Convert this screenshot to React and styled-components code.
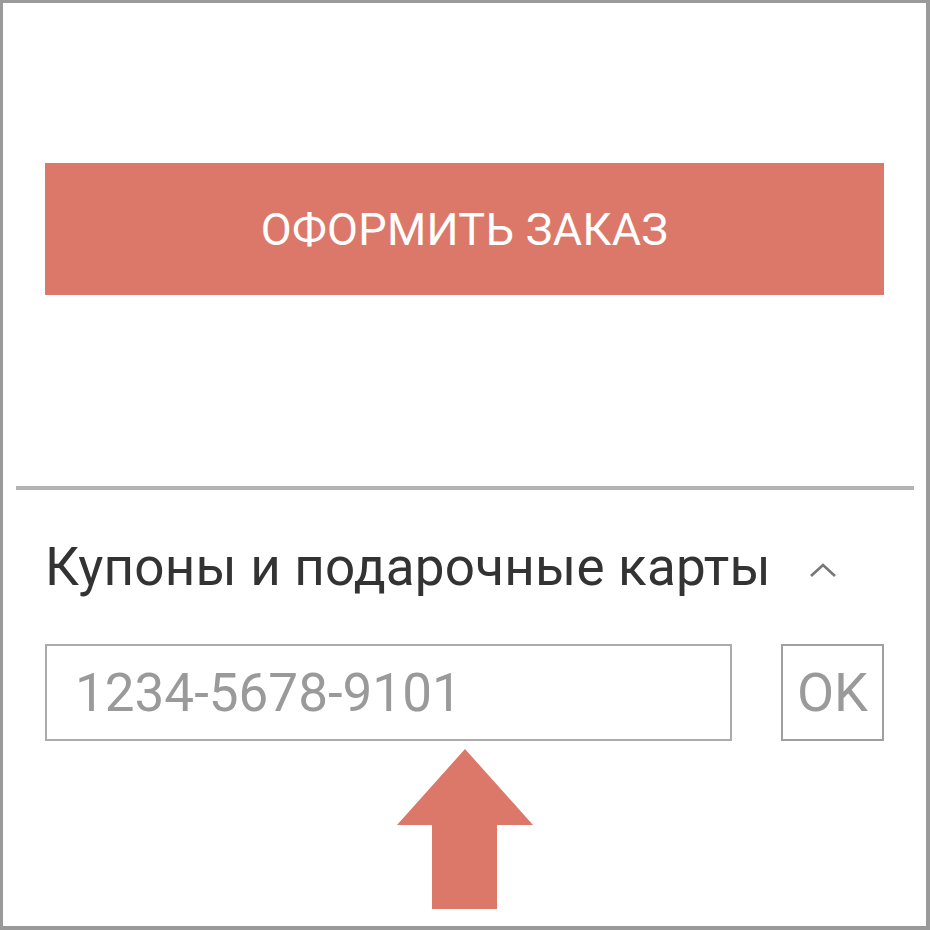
import React from 'react'
import styled, { createGlobalStyle } from 'styled-components'

const Global = createGlobalStyle`
  html, body {
    margin: 0;
    padding: 0;
    background: #fff;
  }
  body {
    font-family: Roboto, 'Liberation Sans', sans-serif;
  }
`

const Frame = styled.div`
  width: 930px;
  height: 930px;
  box-sizing: border-box;
  border: 3px solid #9a9a9a;
  border-right-width: 4px;
  border-bottom-width: 4px;
  background: #fff;
  overflow: hidden;
`

const Section = styled.div`
  padding: 0 42px;
`

const OrderButton = styled.button`
  display: flex;
  align-items: center;
  justify-content: center;
  width: 100%;
  height: 132px;
  margin-top: 160px;
  border: 0;
  padding: 0;
  background: #dc7869;
  color: #fff;
  font-family: Roboto, 'Liberation Sans', sans-serif;
  font-size: 45px;
  font-weight: 400;
  letter-spacing: 0.3px;
`

const Divider = styled.div`
  height: 4px;
  margin: 191px 12px 0 13px;
  background: #b3b3b3;
`

const Header = styled.div`
  display: flex;
  align-items: center;
  margin-top: 42px;
  height: 70px;
`

const Title = styled.h2`
  margin: 0;
  font-family: Roboto, 'Liberation Sans', sans-serif;
  font-size: 53px;
  font-weight: 400;
  color: #333;
  letter-spacing: 0.2px;
`

const Chevron = styled.svg`
  margin-left: 38px;
  margin-top: 6px;
`

const InputRow = styled.div`
  display: flex;
  gap: 49px;
  margin-top: 42px;
`

const CodeInput = styled.input`
  width: 687px;
  height: 97px;
  box-sizing: border-box;
  border: 2px solid #ababab;
  padding: 0 0 0 28px;
  font-family: Roboto, 'Liberation Sans', sans-serif;
  font-size: 53px;
  color: #333;
  outline: none;

  &::placeholder {
    color: #9a9a9a;
  }
`

const OkButton = styled.button`
  width: 104px;
  height: 97px;
  box-sizing: border-box;
  border: 2px solid #a0a0a0;
  background: #fff;
  padding: 0;
  font-family: Roboto, 'Liberation Sans', sans-serif;
  font-size: 54px;
  color: #9a9a9a;
`

const ArrowWrap = styled.div`
  display: flex;
  justify-content: center;
  margin-top: 8px;
`

export default function App () {
  return (
    <>
      <Global />
      <Frame>
        <Section>
          <OrderButton>ОФОРМИТЬ ЗАКАЗ</OrderButton>
        </Section>
        <Divider />
        <Section>
          <Header>
            <Title>Купоны и подарочные карты</Title>
            <Chevron width="28" height="16" viewBox="0 0 28 16">
              <polyline points="2,14 14,3 26,14" fill="none" stroke="#777" strokeWidth="2.6" />
            </Chevron>
          </Header>
          <InputRow>
            <CodeInput placeholder="1234-5678-9101" />
            <OkButton>OK</OkButton>
          </InputRow>
          <ArrowWrap>
            <svg width="136" height="160" viewBox="0 0 136 160">
              <polygon points="68,0 136,76 100,76 100,160 35,160 35,76 0,76" fill="#dc7869" />
            </svg>
          </ArrowWrap>
        </Section>
      </Frame>
    </>
  )
}
